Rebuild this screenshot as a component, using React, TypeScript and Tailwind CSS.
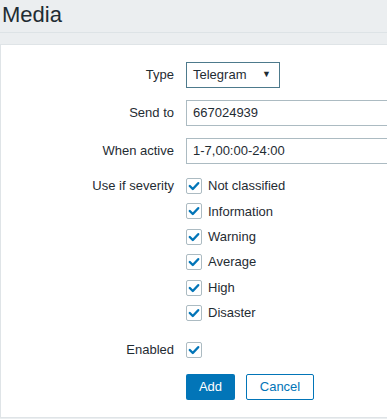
import { ReactNode } from "react";

const severities = ["Not classified", "Information", "Warning", "Average", "High", "Disaster"];

function Check() {
  return (
    <span className="flex h-[16px] w-[16px] shrink-0 items-center justify-center rounded-[2px] border border-[#acbbc2] bg-white">
      <svg width="12" height="12" viewBox="0 0 12 12">
        <path d="M1.8 6 L4.8 9 L10.2 3.2" fill="none" stroke="#0275b8" strokeWidth="2.4" strokeLinecap="round" strokeLinejoin="round" />
      </svg>
    </span>
  );
}

function Row({ label, children, className = "" }: { label: string; children: ReactNode; className?: string }) {
  return (
    <div className={`grid grid-cols-[173px_1fr] gap-x-[12px] ${className}`}>
      <div className="flex h-[26px] items-center justify-end">{label}</div>
      <div className="min-w-0">{children}</div>
    </div>
  );
}

export default function App() {
  return (
    <div className="h-[419px] w-[387px] overflow-hidden bg-[#ebeef0] font-['Liberation_Sans',Arial,sans-serif] text-[13px] text-[#1f2c33]">
      <div className="h-[33px] border-b border-[#dde3e6] pl-[2px]">
        <h1 className="text-[22px] leading-[30px] font-normal">Media</h1>
      </div>
      <div className="mt-[11px] w-[600px] border border-[#dfe4e7] bg-white pt-[17px] pb-[17px]">
        <Row label="Type">
          <div className="flex h-[26px] w-[94px] items-center justify-between border border-[#4d7a8c] pl-[6px] pr-[8px]">
            <span>Telegram</span>
            <span className="text-[9px]">▼</span>
          </div>
        </Row>
        <Row label="Send to" className="mt-[12px]">
          <div className="flex h-[26px] w-[300px] items-center border border-[#acbbc2] px-[6px]">667024939</div>
        </Row>
        <Row label="When active" className="mt-[12px]">
          <div className="flex h-[26px] w-[300px] items-center border border-[#acbbc2] px-[6px]">1-7,00:00-24:00</div>
        </Row>
        <div className="mt-[9px] grid grid-cols-[173px_1fr] gap-x-[12px]">
          <div className="flex h-[26px] items-center justify-end">Use if severity</div>
          <div className="flex flex-col gap-y-[9.4px] pt-[5px]">
            {severities.map((s) => (
              <label key={s} className="flex h-[16px] items-center gap-[6px]">
                <Check />
                <span>{s}</span>
              </label>
            ))}
          </div>
        </div>
        <div className="mt-[16px] grid grid-cols-[173px_1fr] gap-x-[12px]">
          <div className="flex h-[26px] items-center justify-end">Enabled</div>
          <div className="flex h-[26px] items-center">
            <Check />
          </div>
        </div>
        <div className="mt-[11px] flex gap-[11px] pl-[185px]">
          <button className="h-[26px] w-[49px] rounded-[2px] bg-[#0275b8] text-white">Add</button>
          <button className="h-[26px] w-[68px] rounded-[2px] border border-[#0275b8] bg-white text-[#0275b8]">Cancel</button>
        </div>
      </div>
    </div>
  );
}
